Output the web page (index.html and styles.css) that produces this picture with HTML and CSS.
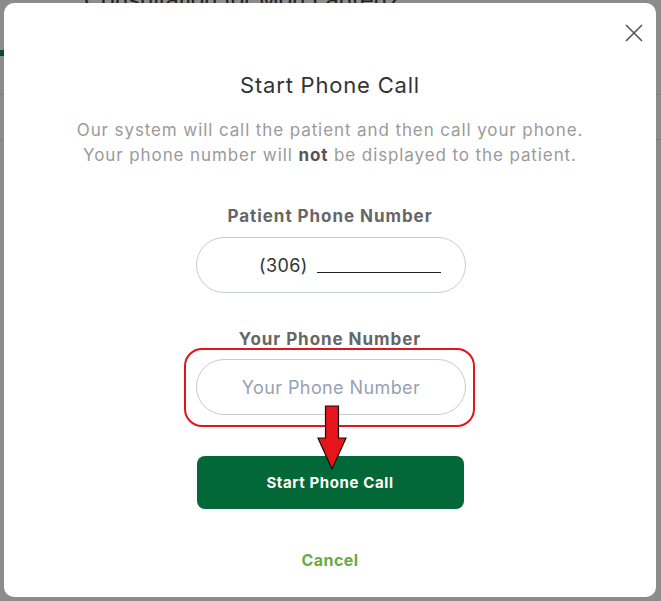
FILE: index.html
```html
<!DOCTYPE html>
<html lang="en">
<head>
    <meta charset="UTF-8">
    <meta name="viewport" content="width=device-width, initial-scale=1.0">
    <title>Start Phone Call</title>
    <link rel="stylesheet" href="styles.css">
</head>
<body>
    <div class="page">
        <div class="page-title">Consultation for Mori Lauren?</div>
        <div class="page-row"><span class="page-mark"></span></div>
        <div class="page-row"></div>
    </div>

    <div class="overlay">
        <div class="modal">
            <button class="close" aria-label="Close">
                <svg width="18" height="18" viewBox="0 0 18 18">
                    <path d="M1 1 L17 17 M17 1 L1 17" stroke="#555" stroke-width="1.6" fill="none"/>
                </svg>
            </button>

            <div class="modal-title">Start Phone Call</div>
            <div class="modal-text">
                Our system will call the patient and then call your phone.<br>
                Your phone number will <b>not</b> be displayed to the patient.
            </div>

            <div class="label label-first">Patient Phone Number</div>
            <div class="field field-filled">
                <span class="area">(306)</span>
                <span class="blank"></span>
            </div>

            <div class="label label-second">Your Phone Number</div>
            <div class="highlight">
                <input class="field field-input" type="text" placeholder="Your Phone Number">
                <svg class="arrow" width="32" height="66" viewBox="0 0 32 66">
                    <path d="M9.5 1 H22.5 V33 H30 L16 64 L2 33 H9.5 Z" fill="#e8141c" stroke="#111" stroke-width="1.2"/>
                </svg>
            </div>

            <button class="start">Start Phone Call</button>
            <div class="cancel">Cancel</div>
        </div>
    </div>
</body>
</html>
```

FILE: styles.css
```css
body {
    margin: 0px;
    font-family: Inter, "Open Sans", sans-serif;
    background-color: #8c8c8c;
    height: 601px;
    overflow: hidden;
}

.page {
    padding: 0px 0px 0px 84px;
}

.page-title {
    margin-top: -14px;
    font-size: 24px;
    color: #222;
    font-family: "Liberation Sans", sans-serif;
}

.page-row {
    height: 44px;
    border-bottom: 1px solid #7e7e7e;
    margin-left: -84px;
}

.page-mark {
    display: block;
    width: 4px;
    height: 6px;
    margin-top: 36px;
    background: #0b4a2a;
}

.overlay {
    position: fixed;
    top: 0px;
    left: 0px;
    right: 0px;
    bottom: 0px;
}

.modal {
    position: absolute;
    top: 3px;
    left: 4px;
    width: 652px;
    height: 594px;
    box-sizing: border-box;
    background: white;
    border-radius: 10px;
    padding-top: 67px;
    display: flex;
    flex-direction: column;
    align-items: center;
}

.close {
    position: absolute;
    top: 19px;
    right: 11px;
    width: 22px;
    height: 22px;
    padding: 0px;
    border: none;
    background: none;
    display: flex;
    align-items: center;
    justify-content: center;
}

.modal-title {
    font-size: 22px;
    line-height: 30px;
    letter-spacing: 0.8px;
    color: #333;
}

.modal-text {
    margin-top: 18px;
    font-size: 17px;
    line-height: 25px;
    letter-spacing: 0.9px;
    color: #9a9a9a;
    text-align: center;
}

.modal-text b {
    color: #555;
    font-weight: 700;
}

.label {
    font-size: 17px;
    line-height: 24px;
    letter-spacing: 0.95px;
    font-weight: 700;
    color: #666;
}

.label-first {
    margin-top: 36px;
}

.label-second {
    margin-top: 34px;
}

.field {
    box-sizing: border-box;
    width: 270px;
    height: 56px;
    border: 1px solid #c6cad2;
    border-radius: 28px;
    background: white;
    font-family: Inter, sans-serif;
    font-size: 18px;
    letter-spacing: 0.4px;
}

.field-filled {
    margin-top: 9px;
    margin-left: 2px;
    display: flex;
    align-items: center;
    padding-left: 62px;
    color: #333;
}

.area {
    margin-right: 9px;
}

.blank {
    display: inline-block;
    width: 124px;
    height: 15px;
    border-bottom: 1px solid #222;
}

.highlight {
    position: relative;
    margin-top: 8px;
    margin-left: 2px;
}

.highlight::before {
    content: "";
    position: absolute;
    top: -11px;
    left: -12px;
    right: -9px;
    bottom: -12px;
    border: 2px solid #e3141c;
    border-radius: 18px;
}

.field-input {
    display: block;
    text-align: center;
    outline: none;
    padding: 0px;
    color: #333;
}

.field-input::placeholder {
    color: #98a1b3;
}

.arrow {
    position: absolute;
    left: 120px;
    top: 46px;
    z-index: 2;
}

.start {
    margin-top: 41px;
    width: 267px;
    height: 53px;
    border: none;
    border-radius: 8px;
    background-color: #036837;
    color: white;
    font-family: Inter, sans-serif;
    font-size: 15px;
    letter-spacing: 0.6px;
    font-weight: 700;
}

.cancel {
    margin-top: 39px;
    font-size: 16px;
    line-height: 24px;
    letter-spacing: 0.4px;
    font-weight: 700;
    color: #6aaa45;
}
```
